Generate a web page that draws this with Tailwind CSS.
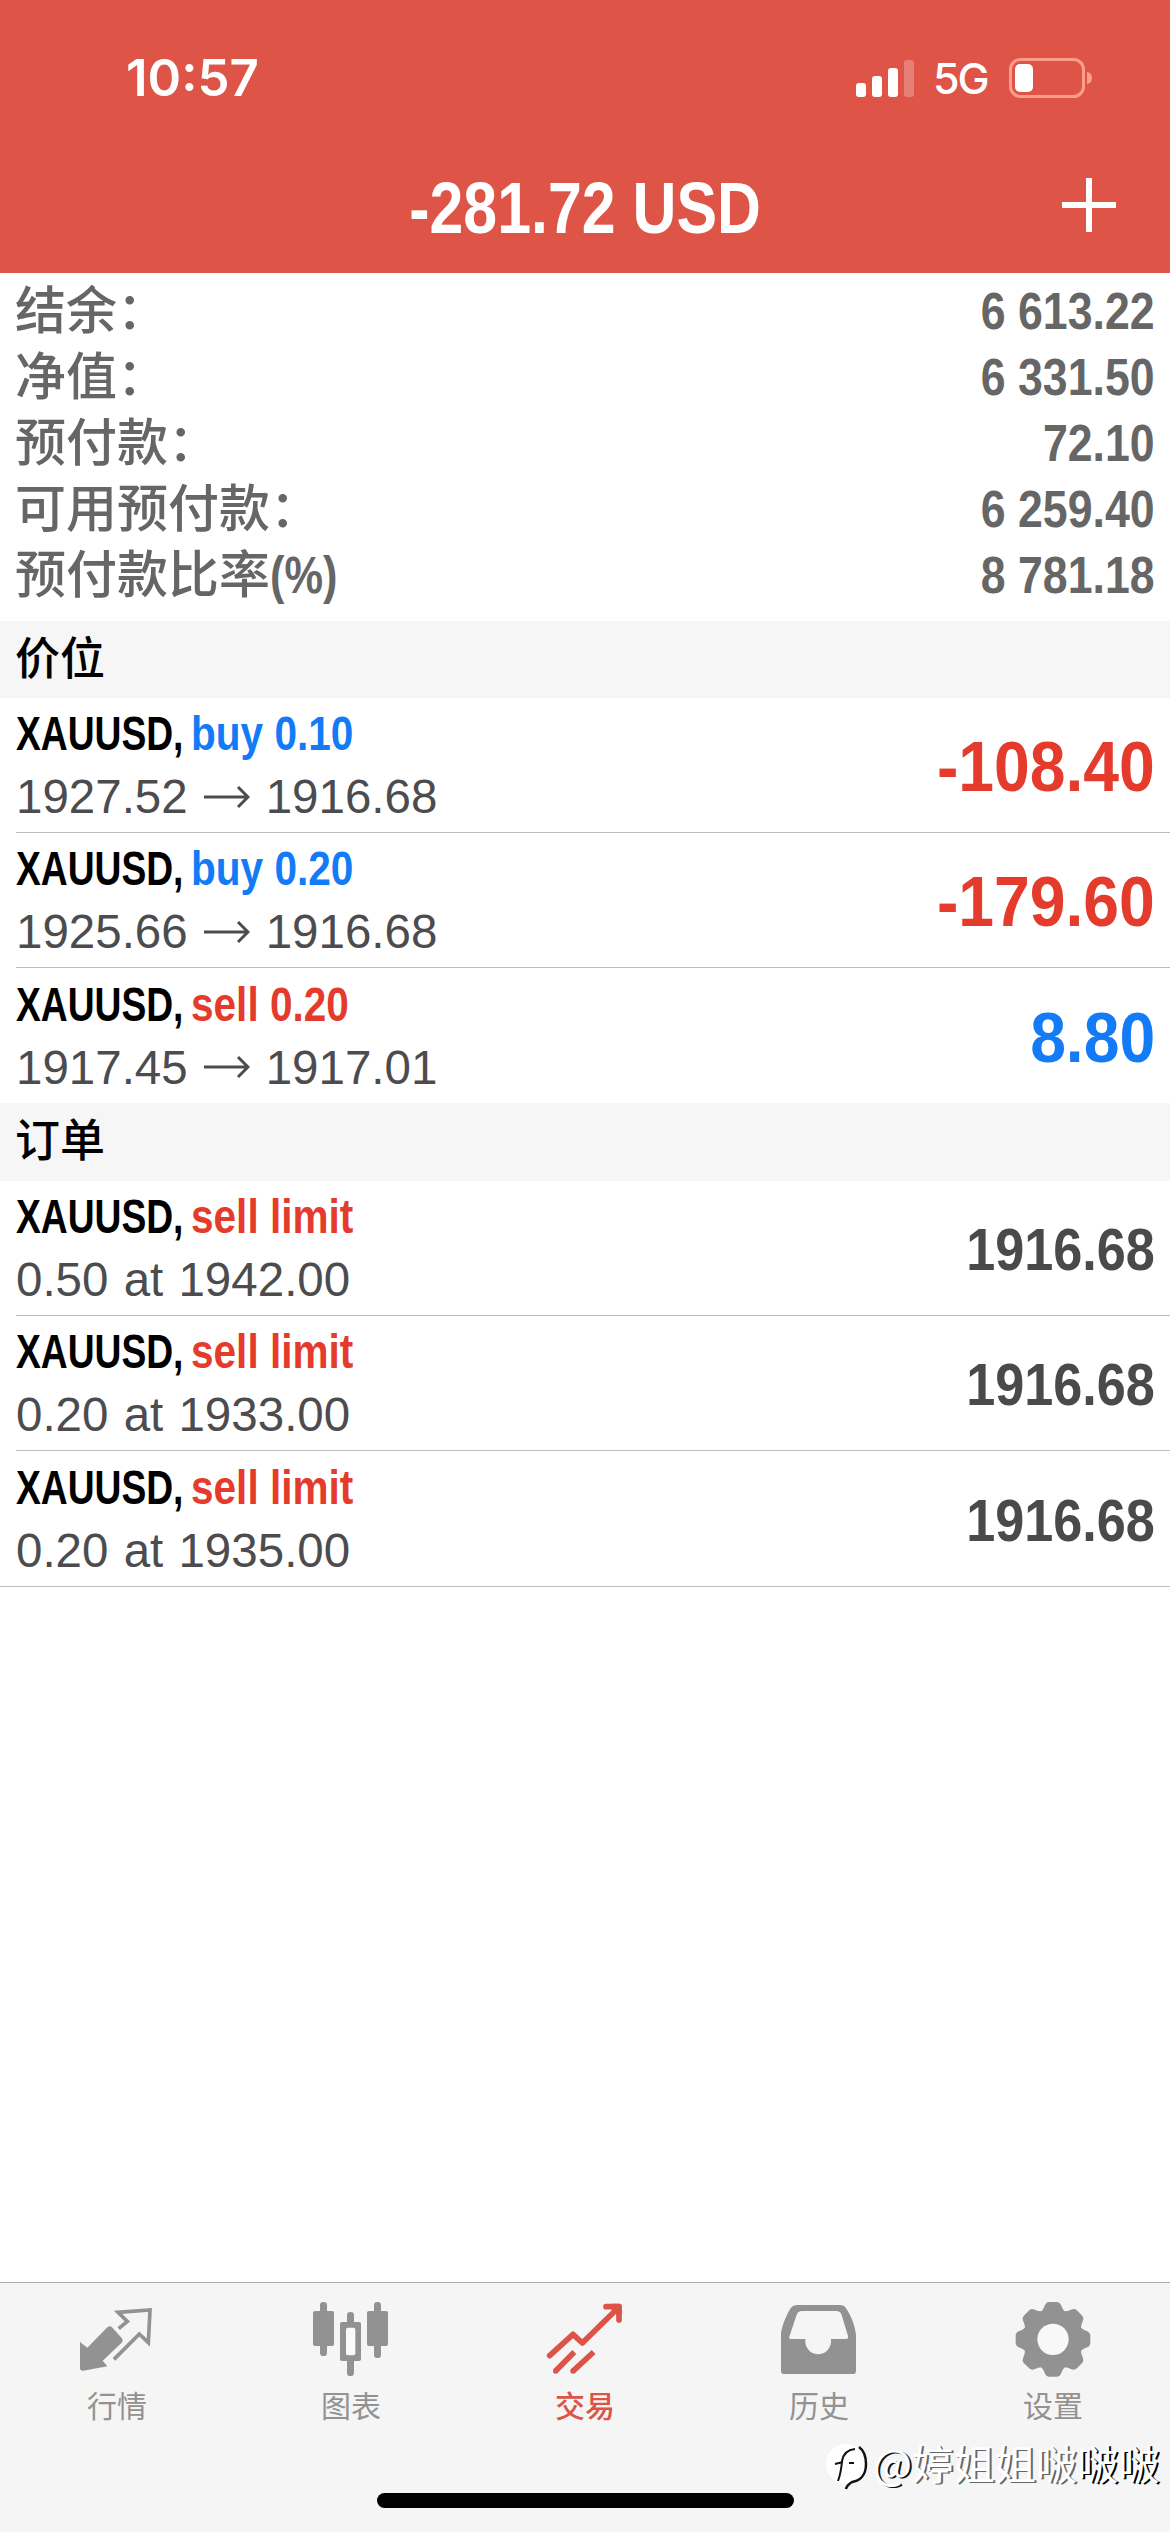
<!DOCTYPE html>
<html lang="zh-CN">
<head>
    <meta charset="UTF-8">
    <meta name="viewport" content="width=device-width, initial-scale=1.0">
    <title>交易</title>
    <script src="https://cdn.jsdelivr.net/npm/@tailwindcss/browser@4"></script>
</head>
<body class="bg-white font-['Liberation_Sans','Noto_Sans_CJK_SC',sans-serif]">
<div class="relative flex flex-col w-[1170px] h-[2532px] overflow-hidden">
    <header class="bg-[#de5548] text-white h-[273px] shrink-0">
        <div class="flex items-center justify-between h-[156px] pl-[126px] pr-[77px] font-['Inter',sans-serif]">
            <span class="text-[51px] font-semibold">10:57</span>
            <div class="flex items-center">
                <svg class="w-[58px] h-[38px]" viewBox="0 0 58 38" fill="#fff">
                    <rect x="0" y="24" width="10" height="14" rx="3"/>
                    <rect x="16" y="17" width="10" height="21" rx="3"/>
                    <rect x="32" y="9" width="10" height="29" rx="3"/>
                    <rect x="48" y="1" width="10" height="37" rx="3" opacity=".25"/>
                </svg>
                <span class="w-[95px] pl-[19px] text-[43px] font-medium tracking-[-2px]">5G</span>
                <svg class="w-[84px] h-[40px]" viewBox="0 0 84 40">
                    <rect x="1.5" y="1.5" width="73" height="37" rx="10" fill="none" stroke="#ff9d8c" stroke-width="3"/>
                    <rect x="6" y="6" width="18" height="28" rx="5" fill="#fff"/>
                    <path d="M78 14q5 1 5 6t-5 6z" fill="#ff9d8c"/>
                </svg>
            </div>
        </div>
        <div class="grid grid-cols-[1fr_auto_1fr] items-center h-[103px] px-[54px]">
            <span></span>
            <h1 class="text-[72px] leading-[100px] font-bold scale-x-[.845]">-281.72 USD</h1>
            <svg class="w-[54px] h-[54px] justify-self-end -mt-[6px]" viewBox="0 0 54 54" stroke="#fff" stroke-width="6">
                <path d="M27 0v54M0 27h54"/>
            </svg>
        </div>
    </header>

    <!-- account summary -->
    <section class="h-[348px] shrink-0 pt-[6px] pl-[15px] pr-[15px] text-[51px] leading-[66px] font-bold text-[#666]">
        <div class="flex justify-between h-[66px]"><span class="font-medium">结余：</span><span class="origin-right scale-x-[.875]">6 613.22</span></div>
        <div class="flex justify-between h-[66px]"><span class="font-medium">净值：</span><span class="origin-right scale-x-[.875]">6 331.50</span></div>
        <div class="flex justify-between h-[66px]"><span class="font-medium">预付款：</span><span class="origin-right scale-x-[.875]">72.10</span></div>
        <div class="flex justify-between h-[66px]"><span class="font-medium">可用预付款：</span><span class="origin-right scale-x-[.875]">6 259.40</span></div>
        <div class="flex justify-between h-[66px]"><span class="font-medium">预付款比率<span class="inline-block origin-left scale-x-[.85] font-bold">(%)</span></span><span class="origin-right scale-x-[.875]">8 781.18</span></div>
    </section>

    <h2 class="bg-[#f6f6f6] h-[77px] shrink-0 px-[15px] text-[45px] leading-[77px] font-medium text-black">价位</h2>
    <ul id="positions" class="shrink-0"></ul>
    <h2 class="bg-[#f6f6f6] h-[78px] shrink-0 px-[15px] text-[45px] leading-[77px] font-medium text-black">订单</h2>
    <ul id="orders" class="shrink-0 border-b border-[#bebec1]"></ul>

    <nav class="mt-auto h-[250px] shrink-0 bg-[#f5f5f5] border-t border-[#a9a9a9] grid grid-cols-5 text-[#929292] text-[30px] leading-[40px]">
        <a class="flex flex-col items-center pt-[17px]">
            <svg class="w-[78px] h-[78px]" viewBox="0 0 234 234">
                <path d="M6 126l22 17 58-59q8-9 16-2l29 32q6 8 0 14l-57 54 14 17-72 13q-10 1-10-8z" fill="currentColor"/>
                <path d="M122 86l26-22-28-27 96-7-5 98-27-26-76 76" fill="none" stroke="currentColor" stroke-width="11"/>
            </svg>
            <span class="mt-[9px]">行情</span>
        </a>
        <a class="flex flex-col items-center pt-[17px]">
            <svg class="w-[78px] h-[78px]" viewBox="0 0 234 234" fill="currentColor">
                <rect x="3" y="33" width="63" height="105" rx="6"/><rect x="24" y="6" width="21" height="162" rx="10"/>
                <rect x="105" y="36" width="21" height="192" rx="10"/><rect x="84" y="66" width="63" height="117" rx="6"/>
                <rect x="102" y="83" width="28" height="83" rx="6" fill="#fafafa"/>
                <rect x="165" y="33" width="63" height="105" rx="6"/><rect x="186" y="6" width="21" height="168" rx="10"/>
            </svg>
            <span class="mt-[9px]">图表</span>
        </a>
        <a class="flex flex-col items-center pt-[17px] text-[#dc5347]">
            <svg class="w-[78px] h-[78px]" viewBox="0 0 234 234" fill="none" stroke="currentColor" stroke-width="17" stroke-linejoin="round">
                <path d="M11 167l70-64 28 26L216 24M180 20h39v40" stroke-linecap="round"/>
                <path d="M200 20h19v20z" fill="currentColor"/>
                <path d="M28 214l57-58M80 214l63-58"/>
                <circle cx="29" cy="213" r="8" fill="currentColor" stroke="none"/>
                <circle cx="81" cy="213" r="8" fill="currentColor" stroke="none"/>
            </svg>
            <span class="mt-[9px] font-medium">交易</span>
        </a>
        <a class="flex flex-col items-center pt-[17px]">
            <svg class="w-[78px] h-[78px]" viewBox="0 0 234 234" fill="currentColor" fill-rule="evenodd">
                <path d="M3 100C6 75 22 40 32 25Q40 15 52 15H180Q192 15 198 25C212 45 225 75 228 105V212Q228 222 218 222H13Q3 222 3 212ZM33 117H76V124A38 38 0 0 0 153 124V117H198Q206 117 204 108L184 42Q180 33 168 33H66Q54 33 50 44L28 110Q26 117 33 117Z"/>
            </svg>
            <span class="mt-[9px]">历史</span>
        </a>
        <a class="flex flex-col items-center pt-[17px]">
            <svg class="w-[78px] h-[78px]" viewBox="-117 -118 234 234" fill="currentColor">
                <defs><path id="tooth" d="M-40-80Q-30-86-24-103-20-112-12-112H12Q20-112 24-103 30-86 40-80Z"/></defs>
                <circle r="89"/>
                <use href="#tooth"/><use href="#tooth" transform="rotate(45)"/><use href="#tooth" transform="rotate(90)"/><use href="#tooth" transform="rotate(135)"/>
                <use href="#tooth" transform="rotate(180)"/><use href="#tooth" transform="rotate(225)"/><use href="#tooth" transform="rotate(270)"/><use href="#tooth" transform="rotate(315)"/>
                <circle r="47" fill="#f8f8f8"/>
            </svg>
            <span class="mt-[9px]">设置</span>
        </a>
    </nav>

    <!-- home indicator -->
    <div class="absolute left-[377px] top-[2493px] w-[417px] h-[15px] rounded-full bg-black"></div>

    <!-- author mark over the tab bar -->
    <div class="absolute left-[825px] top-[2437px] flex items-center h-[50px]">
        <svg class="w-[48px] h-[54px] mt-[12px]" viewBox="0 0 48 54">
            <circle cx="21" cy="23" r="20" fill="#fff"/>
            <path d="M34 6q7 5 7 17c0 12-7 17-14 18q-5 3-6 7" fill="none" stroke="#111" stroke-width="2.5"/>
            <path d="M13 40q3-8 4-20 2-11 13-12M10 23l8-2M24 22h5" fill="none" stroke="#111" stroke-width="2"/>
        </svg>
        <span class="text-white text-[41.3px] leading-[50px] whitespace-nowrap font-['Noto_Sans_CJK_SC',sans-serif] [text-shadow:2px_1px_0_#666]"><span class="[text-shadow:2px_1px_0_#111]">@</span>婷姐姐啵<span class="[text-shadow:2px_1px_0_#000]">啵啵</span></span>
    </div>
</div>
<script>
const positions = [
    { type: 'buy 0.10', open: '1927.52', price: '1916.68', profit: '-108.40' },
    { type: 'buy 0.20', open: '1925.66', price: '1916.68', profit: '-179.60' },
    { type: 'sell 0.20', open: '1917.45', price: '1917.01', profit: '8.80' },
];
const orders = [
    { type: 'sell limit', info: '0.50 at 1942.00', price: '1916.68' },
    { type: 'sell limit', info: '0.20 at 1933.00', price: '1916.68' },
    { type: 'sell limit', info: '0.20 at 1935.00', price: '1916.68' },
];
const blue = 'text-[#127bf5]';
const red = 'text-[#e43b2c]';
const arrow = '<svg class="w-[46px] h-[24px] mx-[16px]" viewBox="0 0 46 24" fill="none" stroke="currentColor" stroke-width="3"><path d="M0 12h44M34 2l10 10-10 10"/></svg>';

function row(type, info, right, last) {
    const color = type.startsWith('buy') ? blue : red;
    return `
        <li class="ml-[16px] pr-[15px] h-[135px] flex justify-between items-center ${last ? '' : 'border-b border-[#bebec1]'}">
            <div>
                <div class="flex text-[48px] leading-[63px] font-bold text-black whitespace-nowrap">
                    <span class="w-[175px] origin-left scale-x-[.775]">XAUUSD,</span>
                    <span class="origin-left scale-x-[.845] ${color}">${type}</span>
                </div>
                <div class="flex items-center text-[47.5px] leading-[63px] text-[#4c4c4e] [word-spacing:2px]">${info}</div>
            </div>
            ${right}
        </li>`;
}

document.getElementById('positions').innerHTML = positions.map((p, i) => row(
    p.type, p.open + arrow + p.price,
    `<span class="text-[71px] leading-[90px] mt-[4px] font-bold origin-right scale-x-[.905] ${p.profit.startsWith('-') ? red : blue}">${p.profit}</span>`,
    i === positions.length - 1)).join('');

document.getElementById('orders').innerHTML = orders.map((o, i) => row(
    o.type, o.info, `<span class="text-[60px] leading-[80px] mt-[4px] font-bold origin-right scale-x-[.87] text-[#4a4a4d]">${o.price}</span>`,
    i === orders.length - 1)).join('');
</script>
</body>
</html>
